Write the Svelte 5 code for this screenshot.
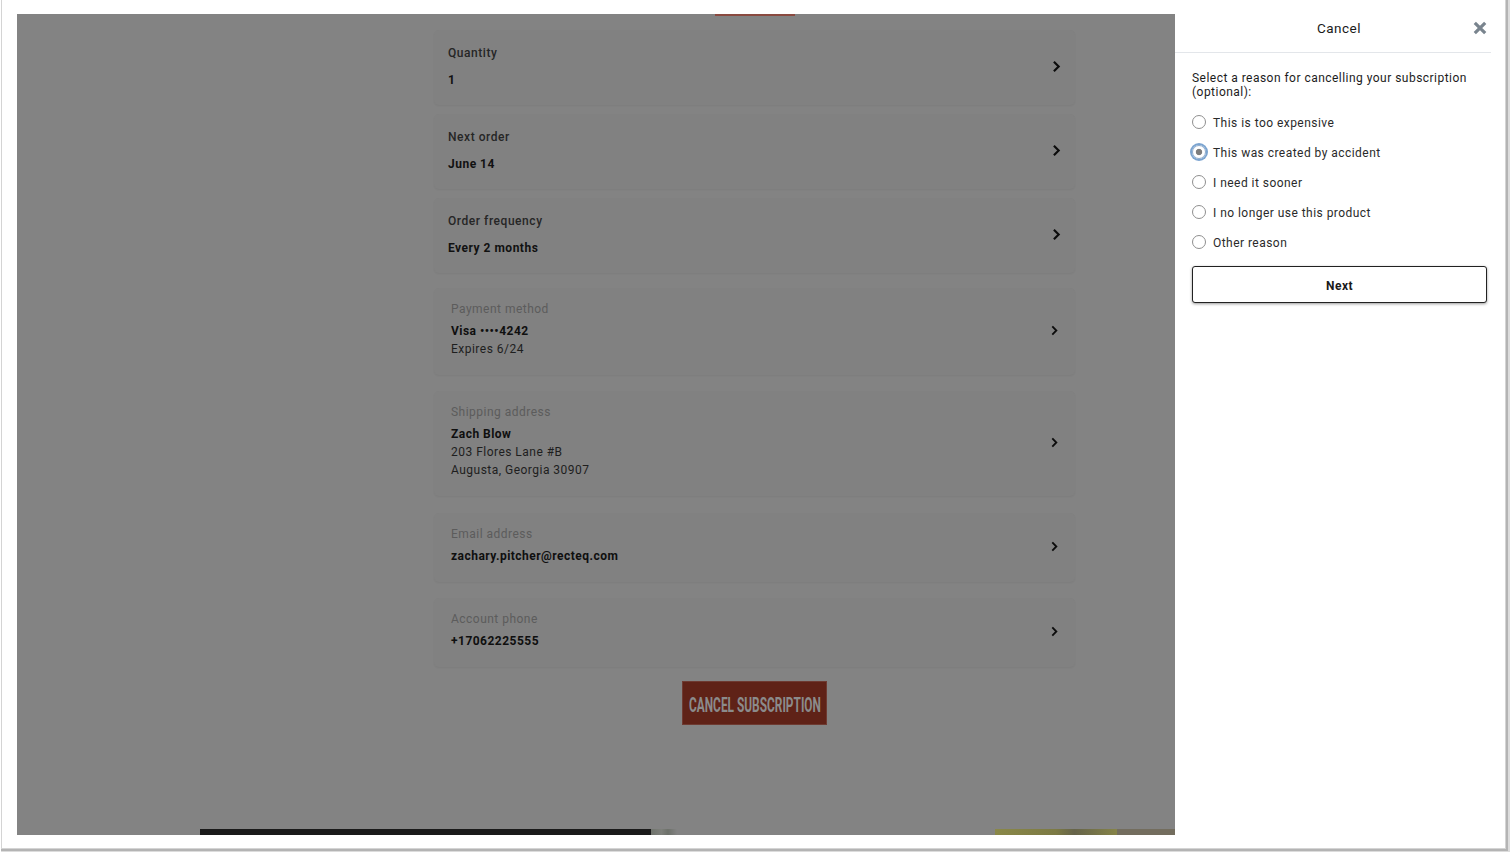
<script>
	const plainRows = [
		{ label: 'Quantity', value: '1' },
		{ label: 'Next order', value: 'June 14' },
		{ label: 'Order frequency', value: 'Every 2 months' }
	];

	const detailRows = [
		{ label: 'Payment method', strong: 'Visa ••••4242', lines: ['Expires 6/24'] },
		{ label: 'Shipping address', strong: 'Zach Blow', lines: ['203 Flores Lane #B', 'Augusta, Georgia 30907'] },
		{ label: 'Email address', strong: 'zachary.pitcher@recteq.com', lines: [] },
		{ label: 'Account phone', strong: '+17062225555', lines: [] }
	];

	const reasons = [
		'This is too expensive',
		'This was created by accident',
		'I need it sooner',
		'I no longer use this product',
		'Other reason'
	];

	let selected = $state(reasons[1]);
</script>

{#snippet chevron(size)}
	<svg class="chevron" width={size} height={size} viewBox="0 0 12 12" aria-hidden="true">
		<path d="M3.6 1.6 8 6l-4.4 4.4" fill="none" stroke="#0c0c0c" stroke-width="2" />
	</svg>
{/snippet}

<div class="screen">
	<div class="window">
		<main class="page">
			<div class="top-accent"></div>
			<div class="column">
				{#each plainRows as row}
					<section class="card plain">
						<div>
							<div class="plain-label">{row.label}</div>
							<div class="plain-value">{row.value}</div>
						</div>
						{@render chevron(13)}
					</section>
				{/each}

				<div class="details">
					{#each detailRows as row}
						<section class="card detail">
							<div class="detail-text">
								<div class="detail-label">{row.label}</div>
								<div class="detail-strong">{row.strong}</div>
								{#each row.lines as line}
									<div class="detail-line">{line}</div>
								{/each}
							</div>
							{@render chevron(11)}
						</section>
					{/each}
				</div>

				<button class="cancel-btn"><span>CANCEL SUBSCRIPTION</span></button>
			</div>

			<div class="peek">
				<div class="peek-dark"></div>
				<div class="peek-leaf"></div>
				<div class="peek-gap"></div>
				<div class="peek-yellow"></div>
				<div class="peek-tan"></div>
			</div>
		</main>

		<aside class="drawer">
			<header class="drawer-head">
				<h2>Cancel</h2>
				<button class="close" aria-label="Close">
					<svg width="14" height="14" viewBox="0 0 14 14" aria-hidden="true">
						<path d="M1.8 1.8l10.4 10.4M12.2 1.8 1.8 12.2" stroke="#79848e" stroke-width="3.2" fill="none" />
					</svg>
				</button>
			</header>
			<div class="drawer-body">
				<p class="prompt">Select a reason for cancelling your subscription (optional):</p>
				<div class="reasons">
					{#each reasons as reason}
						<label class="reason">
							<input type="radio" name="reason" value={reason} bind:group={selected} />
							<span>{reason}</span>
						</label>
					{/each}
				</div>
				<button class="next">Next</button>
			</div>
		</aside>
	</div>
</div>

<style>
	:global(body) {
		background: #fff;
		font-family: Roboto, "Liberation Sans", sans-serif;
	}

	.screen {
		box-sizing: border-box;
		width: 1512px;
		height: 852px;
		padding-left: 2px;
		overflow: hidden;
	}

	.window {
		box-sizing: border-box;
		width: 1503px;
		height: 848px;
		padding: 14px 0 0 15px;
		display: flex;
		align-items: flex-start;
		background: #fff;
		box-shadow: 0 0 0 1px #d4d4d4, 1px 1px 0 2px #b4b4b4, 2px 2px 0 3px #dcdcdc;
	}

	.page {
		position: relative;
		flex: none;
		width: 1158px;
		height: 821px;
		background: #838383;
		display: flex;
		flex-direction: column;
		align-items: flex-start;
		overflow: hidden;
	}

	.top-accent {
		width: 80px;
		height: 2px;
		margin-left: 698px;
		background: #8a4a40;
		flex: none;
	}

	.column {
		width: 641px;
		margin-left: 417px;
		padding-top: 14px;
		display: flex;
		flex-direction: column;
		align-items: center;
	}

	.card {
		box-sizing: border-box;
		width: 100%;
		background: #818181;
		border-radius: 5px;
		box-shadow: 0 1px 2px rgba(0, 0, 0, 0.05);
		display: flex;
		align-items: center;
		justify-content: space-between;
	}

	.plain {
		height: 75px;
		margin-bottom: 9px;
		padding: 0 12px 3px 14px;
	}

	.plain-label {
		font-size: 12px;
		font-weight: 500;
		line-height: 16px;
		letter-spacing: 0.55px;
		color: #262626;
	}

	.plain-value {
		margin-top: 11px;
		font-size: 12px;
		font-weight: 700;
		line-height: 16px;
		letter-spacing: 0.5px;
		color: #111;
	}

	.details {
		width: 100%;
		padding-top: 6px;
		display: flex;
		flex-direction: column;
		gap: 16px;
	}

	.detail {
		padding: 0 15px 0 17px;
	}

	.detail:nth-child(2) {
		margin-bottom: 1px;
	}

	.detail-text {
		padding: 12px 0 17px;
	}

	.detail .chevron {
		margin-bottom: 3px;
	}

	.detail-label {
		font-size: 12px;
		line-height: 18px;
		letter-spacing: 0.48px;
		color: #5c5c5c;
		margin-bottom: 4px;
	}

	.detail-strong {
		font-size: 12px;
		font-weight: 700;
		line-height: 18px;
		letter-spacing: 0.48px;
		color: #0f0f0f;
	}

	.detail-line {
		font-size: 12px;
		line-height: 18px;
		letter-spacing: 0.48px;
		color: #1e1e1e;
	}

	.chevron {
		flex: none;
		display: block;
	}

	.cancel-btn {
		width: 145px;
		height: 44px;
		margin-top: 14px;
		padding: 0;
		border: 1px solid #6e3a31;
		background: #5f2217;
		color: #8b8b8b;
		display: flex;
		align-items: center;
		justify-content: center;
		font-family: Roboto, sans-serif;
		overflow: hidden;
	}

	.cancel-btn span {
		display: block;
		font-size: 18px;
		font-weight: 700;
		white-space: nowrap;
		transform: translateY(1px) scaleX(0.66) scaleY(1.1);
	}

	.peek {
		position: absolute;
		left: 183px;
		right: 0;
		bottom: 0;
		height: 6px;
		display: flex;
	}

	.peek-dark {
		width: 451px;
		background: #1a1a1a;
	}

	.peek-leaf {
		width: 26px;
		background: linear-gradient(90deg, #6f736c, #7d7f7a 40%, #6d716a 65%, #838383);
	}

	.peek-gap {
		width: 318px;
	}

	.peek-yellow {
		width: 122px;
		background: linear-gradient(90deg, #8a8848, #7c7a44 50%, #66644a 65%, #868448);
	}

	.peek-tan {
		flex: 1;
		background: #736d5e;
	}

	.drawer {
		flex: none;
		width: 316px;
		margin-top: -14px;
		font-size: 12px;
		color: #1a1a1a;
	}

	.drawer-head {
		position: relative;
		height: 48px;
		display: flex;
		align-items: center;
		justify-content: center;
		border-bottom: 1px solid #e3e6ea;
		padding: 4px 0 0 12px;
	}

	.drawer-head h2 {
		margin: 0;
		font-size: 13.5px;
		font-weight: 400;
		letter-spacing: 0.5px;
		color: #1a1a1a;
	}

	.close {
		position: absolute;
		top: 21px;
		right: 4px;
		width: 14px;
		height: 14px;
		padding: 0;
		border: 0;
		background: none;
		display: block;
	}

	.close svg {
		display: block;
	}

	.drawer-body {
		padding: 18px 4px 0 17px;
	}

	.prompt {
		margin: 0 0 8px;
		font-size: 12px;
		line-height: 14px;
		letter-spacing: 0.47px;
		color: #1c1c1c;
	}

	.reasons {
		display: flex;
		flex-direction: column;
	}

	.reason {
		height: 30px;
		display: flex;
		align-items: center;
		gap: 7px;
		font-size: 12px;
		letter-spacing: 0.46px;
		color: #2a2a2a;
	}

	.reason span {
		padding-top: 1px;
	}

	.reason input {
		appearance: none;
		box-sizing: border-box;
		width: 14px;
		height: 14px;
		margin: 0;
		flex: none;
		border: 1px solid #8f8f8f;
		border-radius: 50%;
		background: #fff;
	}

	.reason input:checked {
		border: 1px solid #8aa9cc;
		box-shadow: 0 0 0 2px #7ba4d0;
		background: radial-gradient(circle, #7d7d7d 0 2.8px, #fff 3.6px);
	}

	.next {
		display: block;
		width: 295px;
		height: 37px;
		margin-top: 9px;
		padding: 2px 0 0;
		background: #fff;
		border: 1px solid #222;
		border-radius: 3px;
		box-shadow: 0 1px 3px rgba(0, 0, 0, 0.4);
		font-family: Roboto, sans-serif;
		font-size: 12px;
		font-weight: 700;
		letter-spacing: 0.5px;
		color: #1a1a1a;
	}
</style>
